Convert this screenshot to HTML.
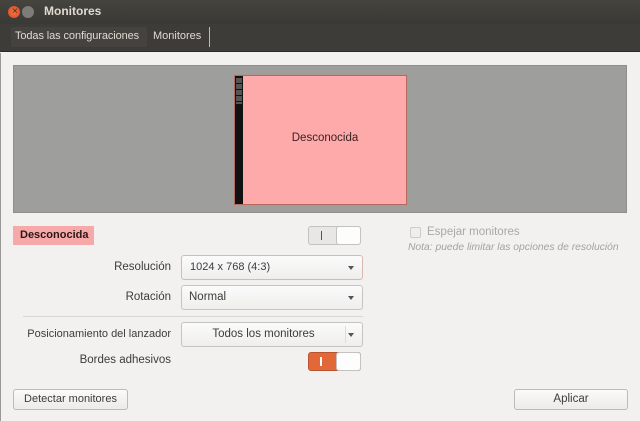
<!DOCTYPE html>
<html><head><meta charset="utf-8"><style>
*{margin:0;padding:0;box-sizing:border-box}
body{width:640px;height:421px;background:#f2f1f0;font-family:"Liberation Sans","DejaVu Sans",sans-serif;font-size:11.5px;color:#3c3c3c;position:relative;overflow:hidden}
.a{position:absolute}
.title{left:0;top:0;width:640px;height:24px;background:linear-gradient(#45443f,#3a3935)}
.tool{left:0;top:24px;width:640px;height:28px;background:#3d3c38;border-bottom:1px solid #2a2a28}
.dd{background:linear-gradient(#fbfbfb,#eeeeed);border:1px solid #c6c4c0;border-radius:3px}
.arrow{position:absolute;right:8px;top:50%;margin-top:-2px;border-left:3px solid transparent;border-right:3px solid transparent;border-top:4px solid #555}
.btn{background:linear-gradient(#fafafa,#ebebea);border:1px solid #bdbbb7;border-radius:3px;text-align:center;line-height:19px}
.lbl{text-align:right;width:150px;left:21px}
</style></head><body>
<div class="a title"></div>
<div class="a" style="left:8px;top:6px;width:12px;height:12px;border-radius:50%;background:radial-gradient(#f07746,#d9471d)"></div>
<div class="a" style="left:12px;top:5px;color:#3a2a20;font-size:10px;line-height:13px">×</div>
<div class="a" style="left:22px;top:6px;width:12px;height:12px;border-radius:50%;background:#7d7c78"></div>
<div class="a" style="left:44px;top:4px;color:#dfdbd2;font-weight:bold;font-size:12px">Monitores</div>
<div class="a tool"></div>
<div class="a" style="left:11px;top:27px;width:136px;height:20px;background:#44433f;border-radius:2px"></div>
<div class="a" style="left:15px;top:30px;color:#dfdbd2;font-size:11px;letter-spacing:-0.1px">Todas las configuraciones</div>
<div class="a" style="left:153px;top:30px;color:#dfdbd2;font-size:11px">Monitores</div>
<div class="a" style="left:209px;top:27px;width:1px;height:20px;background:#bbb"></div>
<div class="a" style="left:0;top:53px;width:1px;height:368px;background:#999"></div>
<div class="a" style="left:13px;top:65px;width:614px;height:148px;background:#9e9e9c;border:1px solid #8e8e8c"></div>
<div class="a" style="left:234px;top:75px;width:173px;height:130px;background:#ffaaaa;border:1px solid #b46a5c;box-shadow:0 0 1px #e08070"></div>
<div class="a" style="left:235px;top:76px;width:8px;height:128px;background:#111"></div>
<div class="a" style="left:236px;top:78px;width:6px;height:26px;background:repeating-linear-gradient(#555 0 5px,#111 5px 6px)"></div>
<div class="a" style="left:243px;top:132px;width:164px;text-align:center;color:#3a2222;font-size:11.5px">Desconocida</div>
<div class="a" style="left:13px;top:226px;width:81px;height:19px;background:#f7a9a9"></div>
<div class="a" style="left:20px;top:229px;font-weight:bold;color:#2a1818;font-size:11px">Desconocida</div>
<div class="a" style="left:308px;top:226px;width:53px;height:19px;border:1px solid #c4c2be;border-radius:3px;background:#e8e7e5"></div>
<div class="a" style="left:321px;top:231px;width:1px;height:9px;background:#555"></div>
<div class="a" style="left:336px;top:226px;width:25px;height:19px;border:1px solid #c4c2be;border-radius:3px;background:#fdfdfd"></div>
<div class="a" style="left:410px;top:227px;width:11px;height:11px;border:1px solid #ccc;border-radius:2px;background:#eee"></div>
<div class="a" style="left:427px;top:226px;color:#a9a8a5;font-size:11.5px">Espejar monitores</div>
<div class="a" style="left:408px;top:242px;color:#a3a29f;font-size:10.3px;font-style:italic">Nota: puede limitar las opciones de resolución</div>
<div class="a lbl" style="top:261px">Resolución</div>
<div class="a dd" style="left:181px;top:255px;width:182px;height:25px;border-color:#d8b8b0"><span style="position:absolute;left:8px;top:5px;font-size:11px">1024 x 768 (4:3)</span><div class="arrow"></div></div>
<div class="a lbl" style="top:291px">Rotación</div>
<div class="a dd" style="left:181px;top:285px;width:182px;height:25px"><span style="position:absolute;left:7px;top:5px">Normal</span><div class="arrow"></div></div>
<div class="a" style="left:23px;top:316px;width:340px;height:1px;background:#d8d7d4"></div>
<div class="a lbl" style="top:328px;left:0;width:171px;font-size:11px">Posicionamiento del lanzador</div>
<div class="a dd" style="left:181px;top:322px;width:182px;height:25px"><span style="position:absolute;left:0;width:163px;text-align:center;top:5px">Todos los monitores</span><div style="position:absolute;left:163px;top:3px;width:1px;height:17px;background:#ddd"></div><div class="arrow"></div></div>
<div class="a lbl" style="top:354px">Bordes adhesivos</div>
<div class="a" style="left:308px;top:352px;width:53px;height:19px;border-radius:3px;background:#e2683a;border:1px solid #b85530"></div>
<div class="a" style="left:320px;top:357px;width:2px;height:9px;background:#fff"></div>
<div class="a" style="left:336px;top:352px;width:25px;height:19px;border:1px solid #c4c2be;border-radius:3px;background:#fdfdfd"></div>
<div class="a btn" style="left:13px;top:389px;width:115px;height:21px;font-size:11px">Detectar monitores</div>
<div class="a btn" style="left:514px;top:389px;width:114px;height:21px">Aplicar</div>
</body></html>
